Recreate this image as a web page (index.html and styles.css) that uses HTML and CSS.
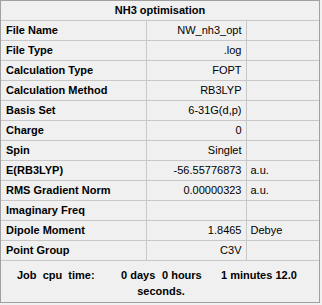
FILE: index.html
```html
<!DOCTYPE html>
<html>
<head>
<meta charset="utf-8">
<link rel="stylesheet" href="styles.css">
</head>
<body>
<div class="panel">
  <table class="grid">
    <colgroup><col class="c1"><col class="c2"><col class="c3"></colgroup>
    <tr><th colspan="3" class="title">NH3 optimisation</th></tr>
    <tr><td class="lbl">File Name</td><td class="val">NW_nh3_opt</td><td></td></tr>
    <tr><td class="lbl">File Type</td><td class="val">.log</td><td></td></tr>
    <tr><td class="lbl">Calculation Type</td><td class="val">FOPT</td><td></td></tr>
    <tr><td class="lbl">Calculation Method</td><td class="val">RB3LYP</td><td></td></tr>
    <tr><td class="lbl">Basis Set</td><td class="val">6-31G(d,p)</td><td></td></tr>
    <tr><td class="lbl">Charge</td><td class="val">0</td><td></td></tr>
    <tr><td class="lbl">Spin</td><td class="val">Singlet</td><td></td></tr>
    <tr><td class="lbl">E(RB3LYP)</td><td class="val">-56.55776873</td><td class="unit">a.u.</td></tr>
    <tr><td class="lbl">RMS Gradient Norm</td><td class="val">0.00000323</td><td class="unit">a.u.</td></tr>
    <tr><td class="lbl">Imaginary Freq</td><td class="val"></td><td></td></tr>
    <tr><td class="lbl">Dipole Moment</td><td class="val">1.8465</td><td class="unit">Debye</td></tr>
    <tr><td class="lbl">Point Group</td><td class="val">C3V</td><td></td></tr>
  </table>
  <div class="footer">
    <div class="line1"><span class="w1">Job  cpu  time:</span><span class="w2">0 days</span><span class="w3">0 hours</span><span>1 minutes 12.0</span></div>
    <div class="line2">seconds.</div>
  </div>
</div>
</body>
</html>
```
FILE: styles.css
```css
html, body {
  margin: 0;
  padding: 0;
  background: #f0f0f0;
}
.panel {
  width: 318px;
  height: 301px;
  border: 1px solid #a0a0a0;
  background: #f0f0f0;
  font-family: "Liberation Sans", Arial, sans-serif;
  font-size: 11px;
  color: #000;
  display: flex;
  flex-direction: column;
}
.grid {
  border-collapse: collapse;
  table-layout: fixed;
  width: 318px;
}
.c1 { width: 145px; }
.c2 { width: 100px; }
.c3 { width: 73px; }
.grid th, .grid td {
  height: 19px;
  padding: 0;
  border-bottom: 1px solid #c8c8c8;
  white-space: nowrap;
  overflow: hidden;
  line-height: 19px;
}
.grid td + td {
  border-left: 1px solid #c8c8c8;
}
.title {
  font-weight: bold;
  text-align: center;
}
.lbl {
  font-weight: bold;
  padding-left: 5px !important;
}
.val {
  text-align: right;
  padding-right: 4px !important;
}
.unit {
  padding-left: 4px !important;
}
.footer {
  flex: 1;
  font-weight: bold;
  padding-top: 6px;
  line-height: 16px;
}
.line1 {
  display: flex;
  padding-left: 16px;
  white-space: pre;
}
.line1 .w1 { width: 104px; }
.line1 .w2 { width: 41px; }
.line1 .w3 { width: 59px; }
.line2 {
  text-align: center;
  padding-left: 2px;
}
```
